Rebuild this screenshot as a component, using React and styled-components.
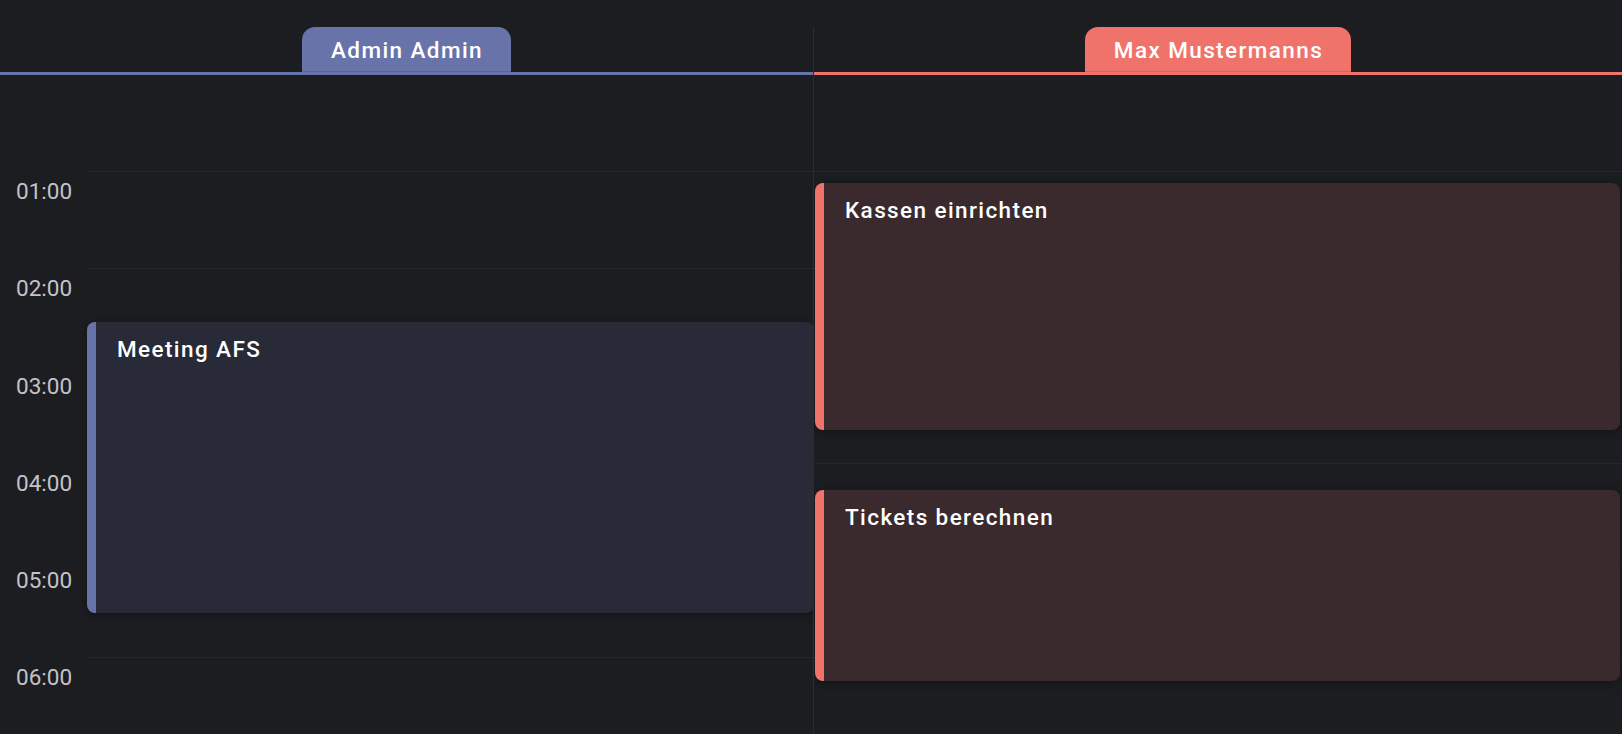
import React from "react";
import styled, { createGlobalStyle } from "styled-components";

const HOUR = 97.2;

const resources = [
  {
    id: "admin",
    name: "Admin Admin",
    color: "#6874a9",
    eventBg: "#282a37",
    events: [{ id: 1, title: "Meeting AFS", start: 153, end: 333 }],
  },
  {
    id: "max",
    name: "Max Mustermanns",
    color: "#ef726b",
    eventBg: "#3a2a2e",
    events: [
      { id: 2, title: "Kassen einrichten", start: 67, end: 220 },
      { id: 3, title: "Tickets berechnen", start: 257, end: 375 },
    ],
  },
];

const hours = [0, 1, 2, 3, 4, 5, 6];

const pad = (n) => String(n).padStart(2, "0");

const App = () => {
  return (
    <>
      <GlobalStyle />
      <Page>
        {resources.map((res, index) => (
          <Column key={res.id} $first={index === 0}>
            <Header $color={res.color}>
              <Tab $color={res.color}>{res.name}</Tab>
            </Header>
            <Body>
              {index === 0 && (
                <Gutter>
                  {hours.map((h) => (
                    <GutterSlot key={h}>
                      {h > 0 && <TimeLabel>{pad(h)}:00</TimeLabel>}
                    </GutterSlot>
                  ))}
                </Gutter>
              )}
              <Track>
                {hours.map((h) => (
                  <HourRow key={h} />
                ))}
                {res.events.map((ev) => (
                  <Event
                    key={ev.id}
                    $first={index === 0}
                    $color={res.color}
                    $bg={res.eventBg}
                    style={{
                      top: (ev.start / 60) * HOUR - 1,
                      height: ((ev.end - ev.start) / 60) * HOUR,
                    }}
                  >
                    <EventTitle>{ev.title}</EventTitle>
                  </Event>
                ))}
              </Track>
            </Body>
          </Column>
        ))}
      </Page>
    </>
  );
};

const GlobalStyle = createGlobalStyle`
  * {
    box-sizing: border-box;
  }
  html, body {
    margin: 0;
    padding: 0;
    background: #1c1d21;
  }
`;

const Page = styled.div`
  height: 100vh;
  overflow: hidden;
  padding-top: 27px;
  display: grid;
  grid-template-columns: 813px 1fr;
  background: #1c1d21;
  font-family: Roboto, "Liberation Sans", sans-serif;
`;

const Column = styled.section`
  display: flex;
  flex-direction: column;
  min-width: 0;
  border-left: ${(p) => (p.$first ? "none" : "1px solid #2b2c31")};
`;

const Header = styled.div`
  display: flex;
  justify-content: center;
  border-bottom: 3px solid ${(p) => p.$color};
`;

const Tab = styled.div`
  height: 45px;
  padding: 0 28px 0 29px;
  display: flex;
  align-items: center;
  background: ${(p) => p.$color};
  border-radius: 13px 13px 0 0;
  box-shadow: inset 0 -1px 0 rgba(0, 0, 0, 0.12);
  color: #ffffff;
  font-size: 22.5px;
  font-weight: 500;
  letter-spacing: 1.4px;
  white-space: nowrap;
`;

const Body = styled.div`
  flex: 1;
  display: flex;
  min-height: 0;
  overflow: hidden;
`;

const Gutter = styled.div`
  width: 87px;
  flex-shrink: 0;
`;

const GutterSlot = styled.div`
  height: ${HOUR}px;
  padding: 6px 0 0 16px;
`;

const TimeLabel = styled.span`
  display: block;
  color: #c3c3c8;
  font-size: 22.5px;
  line-height: 26px;
`;

const Track = styled.div`
  position: relative;
  flex: 1;
  min-width: 0;
`;

const HourRow = styled.div`
  height: ${HOUR}px;
  border-bottom: 1px solid #26272c;
`;

const Event = styled.div`
  position: absolute;
  z-index: 1;
  left: ${(p) => (p.$first ? "0" : "1px")};
  right: ${(p) => (p.$first ? "-1px" : "2px")};
  padding: 14px 21px;
  background: ${(p) => p.$bg};
  border-left: 9px solid ${(p) => p.$color};
  border-radius: 8px;
  box-shadow: 0 2px 10px rgba(0, 0, 0, 0.35);
  overflow: hidden;
`;

const EventTitle = styled.div`
  color: #ffffff;
  font-size: 22.5px;
  font-weight: 500;
  line-height: 26px;
  letter-spacing: 1.4px;
`;

export default App;
